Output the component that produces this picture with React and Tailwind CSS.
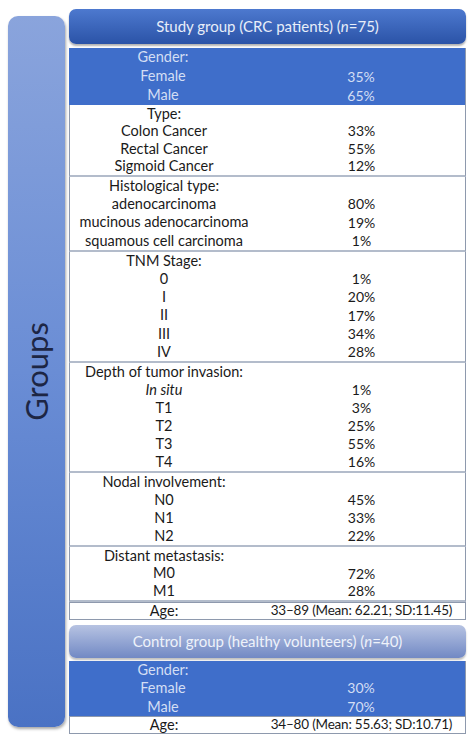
import React from "react";

const study = [
    { title: "Type:", rows: [["Colon Cancer", "33%"], ["Rectal Cancer", "55%"], ["Sigmoid Cancer", "12%"]], h: "h-[72px]" },
    { title: "Histological type:", rows: [["adenocarcinoma", "80%"], ["mucinous adenocarcinoma", "19%"], ["squamous cell carcinoma", "1%"]], h: "h-[75px]" },
    { title: "TNM Stage:", rows: [["0", "1%"], ["I", "20%"], ["II", "17%"], ["III", "34%"], ["IV", "28%"]], h: "h-[111px]" },
    { title: "Depth of tumor invasion:", rows: [["In situ", "1%", true], ["T1", "3%"], ["T2", "25%"], ["T3", "55%"], ["T4", "16%"]], h: "h-[110px]" },
    { title: "Nodal involvement:", rows: [["N0", "45%"], ["N1", "33%"], ["N2", "22%"]], h: "h-[74px]" },
    { title: "Distant metastasis:", rows: [["M0", "72%"], ["M1", "28%"]], h: "h-[55px]" },
];

function Row({ label, value, italic }) {
    return (
        <div className="flex flex-1 items-center">
            <div className={"w-[188px] text-center whitespace-nowrap text-[14.5px] " + (italic ? "italic" : "")}>{label}</div>
            <div className="flex-1 text-center whitespace-nowrap text-[14px]">{value}</div>
        </div>
    );
}

function Section({ title, rows, h, blue }) {
    return (
        <div
            className={
                "flex flex-col " + h + " " +
                (blue
                    ? "bg-[#3f6eca] text-[#d3def4] border-r border-r-[#8e99ad]"
                    : "bg-white text-[#1a1a1a] border-x border-x-[#8e99ad] border-b-[2px] border-b-[#b3bccb]")
            }
        >
            <Row label={title} value="" />
            {rows.map((r) => (
                <Row key={r[0]} label={r[0]} value={r[1]} italic={r[2]} />
            ))}
        </div>
    );
}

function AgeRow({ value }) {
    return (
        <div className="flex h-[18px] items-center bg-white text-[#1a1a1a] border border-[#8e99ad]">
            <div className="w-[188px] text-center text-[14.5px]">Age:</div>
            <div className="flex-1 text-center whitespace-nowrap text-[13.5px] tracking-[-0.2px]">{value}</div>
        </div>
    );
}

export default function App() {
    return (
        <div className="w-[474px] h-[741px] bg-white flex gap-[4px] pl-[8px] pt-[9px] leading-none font-['Lato',sans-serif]">
            <div className="mt-[7px] w-[57px] h-[711px] rounded-[10px] bg-gradient-to-b from-[#8aa4dc] via-[#6a8dd5] to-[#4a72c4] shadow-[1px_2px_3px_rgba(0,0,0,0.35)] flex items-center justify-center">
                <span className="-rotate-90 text-[31px] text-[#1d2644] whitespace-nowrap">Groups</span>
            </div>
            <div className="w-[397px] flex flex-col">
                <div className="h-[35px] rounded-[7px] bg-gradient-to-b from-[#4d79cf] to-[#2b53a7] shadow-[0_2px_2px_rgba(0,0,0,0.3)] flex items-center justify-center text-[#e8eef9] text-[15px]">
                    Study group (CRC patients) (<i>n</i>=75)
                </div>
                <div className="mt-[4px] flex flex-col">
                    <Section title="Gender:" rows={[["Female", "35%"], ["Male", "65%"]]} h="h-[57px]" blue />
                    {study.map((s) => (
                        <Section key={s.title} {...s} />
                    ))}
                    <AgeRow value="33–89 (Mean: 62.21; SD:11.45)" />
                </div>
                <div className="mt-[5px] h-[33px] rounded-[7px] bg-gradient-to-b from-[#b7c3e2] to-[#7289c4] shadow-[0_2px_2px_rgba(0,0,0,0.25)] flex items-center justify-center text-[#eef2fa] text-[15px]">
                    Control group (healthy volunteers) (<i>n</i>=40)
                </div>
                <div className="mt-[3px] flex flex-col">
                    <Section title="Gender:" rows={[["Female", "30%"], ["Male", "70%"]]} h="h-[55px]" blue />
                    <AgeRow value="34–80 (Mean: 55.63; SD:10.71)" />
                </div>
            </div>
        </div>
    );
}
